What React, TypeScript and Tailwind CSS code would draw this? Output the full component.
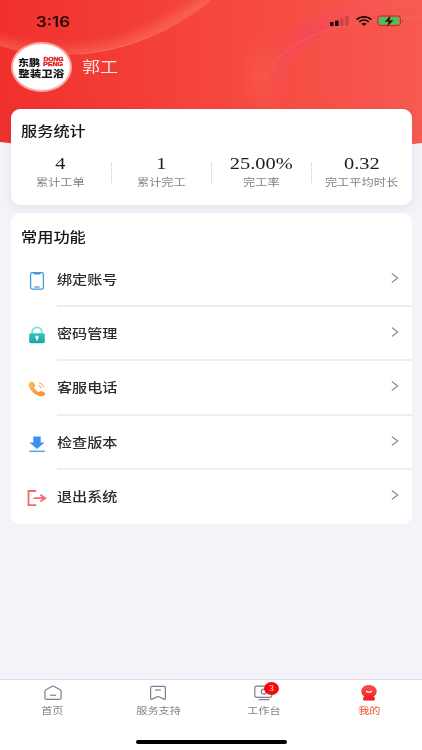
import type { ReactNode } from "react";
import clsx from "clsx";

const stats = [
  { value: "4", label: "累计工单" },
  { value: "1", label: "累计完工" },
  { value: "25.00%", label: "完工率" },
  { value: "0.32", label: "完工平均时长" },
];

const menu = [
  { label: "绑定账号", icon: <PhoneIcon /> },
  { label: "密码管理", icon: <LockIcon /> },
  { label: "客服电话", icon: <CallIcon /> },
  { label: "检查版本", icon: <DownloadIcon /> },
  { label: "退出系统", icon: <ExitIcon /> },
];

const tabs = [
  { label: "首页", icon: <HomeIcon />, active: false },
  { label: "服务支持", icon: <SupportIcon />, active: false },
  { label: "工作台", icon: <DeskIcon />, active: false, badge: 3 },
  { label: "我的", icon: <MineIcon />, active: true },
];

function PhoneIcon() {
  return (
    <svg width="20" height="20" viewBox="0 0 20 20" fill="none">
      <rect x="3.6" y="1.7" width="12.8" height="16.4" rx="1.6" stroke="#3f9bdc" strokeWidth="1.3" />
      <path d="M6 2h8l-.8 1.400H6.800z" fill="#3f9bdc" />
      <path d="M7.500 16h5" stroke="#3f9bdc" strokeWidth="1.300" />
    </svg>
  );
}

function LockIcon() {
  return (
    <svg width="20" height="20" viewBox="0 0 20 20" fill="none">
      <defs>
        <linearGradient id="lock" x1="0" y1="0" x2="0" y2="1">
          <stop stopColor="#35c4bc" />
          <stop offset="1" stopColor="#14aaa6" />
        </linearGradient>
      </defs>
      <path d="M5.200 9V6.800a4.800 4.400 0 0 1 9.600 0V9" stroke="#7ce0d4" strokeWidth="1.800" />
      <rect x="2.200" y="8.200" width="15.600" height="10" rx="1.600" fill="url(#lock)" />
      <circle cx="10" cy="12.200" r="1.600" fill="#fff" />
      <path d="M10 12v3.600" stroke="#fff" strokeWidth="1.500" />
    </svg>
  );
}

function CallIcon() {
  return (
    <svg width="20" height="20" viewBox="0 0 20 20" fill="none">
      <defs>
        <linearGradient id="call" x1="0" y1="0" x2="1" y2="1">
          <stop stopColor="#ffbd5e" />
          <stop offset="1" stopColor="#f68b28" />
        </linearGradient>
      </defs>
      <path
        d="M2.8 3.400C3.900 2.300 5.400 2.300 6.200 3.200l1.700 2.100c.6.9.4 1.700-.5 2.400-.7.6-.5 1.100.1 1.900 1 1.300 2.200 2.300 3.600 3.100.7.4 1.100.3 1.600-.2.7-.7 1.500-.8 2.400-.3l2.200 1.300c1 .7 1.100 1.700.3 2.500-1.500 1.600-3.600 1.700-6 .8C7.100 15.100 3.700 12 2.200 8.200 1.500 6.400 1.600 4.600 2.800 3.400z"
        fill="url(#call)"
      />
      <path d="M11.500 6.600c1.500.3 2.300 1.200 2.600 2.600M12 4c2.600.4 4.300 2 4.700 4.700" stroke="#fbb066" strokeWidth="1.100" />
    </svg>
  );
}

function DownloadIcon() {
  return (
    <svg width="20" height="20" viewBox="0 0 20 20">
      <path d="M6.300 2.400h7.400v6.100H17.600L10 15 2.400 8.500h3.900z" fill="#3f8ff0" />
      <path d="M2.300 16.500h15.500v1.600H2.300z" fill="#5ca5f4" />
    </svg>
  );
}

function ExitIcon() {
  return (
    <svg width="20" height="20" viewBox="0 0 20 20" fill="none" stroke="#f4676c">
      <path d="M9.200 3H1.500v14.200h7.700" strokeWidth="1.800" />
      <path d="M6.500 10.200h11.500M13.400 6.800l4.800 3.400-4.800 3.400" strokeWidth="1.800" />
    </svg>
  );
}

function HomeIcon() {
  return (
    <svg width="20" height="16" viewBox="0 0 20 16" fill="none" stroke="#7b7f8c" strokeWidth="1.200">
      <path d="M1.900 6.200c0-.7.300-1.100 1-1.500L8.800 1.500c.8-.4 1.600-.4 2.400 0l5.900 3.200c.7.400 1 .8 1 1.500v6.600c0 1-.6 1.500-1.600 1.500h-13c-1 0-1.600-.5-1.600-1.500z" />
      <path d="M7 10.200h6" />
    </svg>
  );
}

function SupportIcon() {
  return (
    <svg width="20" height="16" viewBox="0 0 20 16" fill="none" stroke="#7b7f8c" strokeWidth="1.200">
      <path d="M2.600 2.600c0-.8.500-1.300 1.400-1.300h12c.9 0 1.400.5 1.400 1.300v10.800c0 .8-.7 1.100-1.500.7L10.800 11.800a2 2 0 0 0-1.600 0l-5.100 2.300c-.8.400-1.500.1-1.500-.7z" />
      <path d="M7.200 5h5.600" />
    </svg>
  );
}

function DeskIcon() {
  return (
    <svg width="20" height="16" viewBox="0 0 20 16" fill="none" stroke="#7b7f8c" strokeWidth="1.200">
      <rect x=".8" y="1.100" width="17" height="11.200" rx="1.800" />
      <circle cx="9.800" cy="6.600" r="2.500" />
      <path d="M4.600 14.600h10.800" />
    </svg>
  );
}

function MineIcon() {
  return (
    <svg width="20" height="16" viewBox="0 0 20 16">
      <defs>
        <linearGradient id="mine" x1="0" y1="0" x2="0" y2="1">
          <stop stopColor="#fb5450" />
          <stop offset="1" stopColor="#f3161c" />
        </linearGradient>
      </defs>
      <path
        d="M10 0c4.400 0 7.700 2.700 7.700 6.300 0 2.500-1.200 4-3 5 1 .8 1.300 2.200 1.200 3.300-.1.500-.4.800-.9.800H5c-.5 0-.8-.3-.9-.8-.1-1.100.2-2.500 1.200-3.300-1.800-1-3-2.500-3-5C2.300 2.700 5.600 0 10 0z"
        fill="url(#mine)"
      />
      <path d="M7.400 6.200c1.500 1.200 3.700 1.200 5.200 0" stroke="#fff" strokeWidth="1.200" fill="none" strokeLinecap="round" />
    </svg>
  );
}

function HeaderArt() {
  return (
    <svg className="absolute inset-x-0 top-0 -z-10" width="422" height="160" viewBox="0 0 422 160" fill="none">
      <defs>
        <linearGradient id="base" x1="0" y1="0" x2="1" y2="0">
          <stop stopColor="#f0302d" />
          <stop offset=".5" stopColor="#f5463e" />
          <stop offset="1" stopColor="#f75a50" />
        </linearGradient>
        <linearGradient id="ribbon" x1="0" y1="1" x2="1" y2="0">
          <stop stopColor="#f8504c" stopOpacity=".4" />
          <stop offset=".5" stopColor="#f5485a" stopOpacity=".7" />
          <stop offset="1" stopColor="#f7645a" stopOpacity=".2" />
        </linearGradient>
        <radialGradient id="glow">
          <stop stopColor="#ff8068" stopOpacity=".22" />
          <stop offset="1" stopColor="#ff8068" stopOpacity="0" />
        </radialGradient>
        <filter id="soft" x="-20%" y="-50%" width="140%" height="200%">
          <feGaussianBlur stdDeviation="5" />
        </filter>
        <clipPath id="above">
          <path d="M0 0h211Q150 48 84 54 35 58 0 46z" />
        </clipPath>
      </defs>
      <path d="M0 0h422v143Q211 170 0 142z" fill="url(#base)" />
      <g clipPath="url(#above)">
        <path d="M-20 40Q35 58 84 54 150 48 225-12" stroke="#ff8a74" strokeOpacity=".4" strokeWidth="14" filter="url(#soft)" />
      </g>
      <path d="M80 54Q150 48 211 1" stroke="#ff9c88" strokeOpacity=".3" />
      <ellipse cx="262" cy="76" rx="26" ry="40" fill="url(#glow)" />
      <path d="M268 109C266 55 295 15 358 0h64v5C340 14 280 45 278 109z" fill="url(#ribbon)" />
      <path d="M272 66C288 44 325 20 422 17" stroke="#fb7d77" strokeOpacity=".35" />
    </svg>
  );
}

// System fonts here are narrower than the device's, so glyphs are widened
function Wide({ children, className }: { children: ReactNode; className?: string }) {
  return (
    <span className={clsx("inline-block scale-x-120 whitespace-nowrap", className)}>{children}</span>
  );
}

function StatusBar() {
  return (
    <div className="flex h-10 items-center justify-between pt-0.5 pr-[18px] pl-9">
      <Wide className="origin-left font-['Inter'] text-[14px] font-semibold text-[#2a0808]">3:16</Wide>
      <div className="flex items-center gap-[7px]">
        <svg width="19" height="10" viewBox="0 0 19 10" fill="#210808">
          <rect y="6" width="3.600" height="4" rx=".7" />
          <rect x="5" y="4.500" width="3.600" height="5.500" rx=".7" />
          <rect x="10" y="2.300" width="3.600" height="7.700" rx=".7" fillOpacity=".2" />
          <rect x="15.200" width="3.600" height="10" rx=".7" fillOpacity=".2" />
        </svg>
        <svg width="16" height="10" viewBox="0 0 16 10" fill="none" stroke="#210808" strokeWidth="1.700">
          <path d="M.6 3.500C4.800-.1 11.200-.1 15.400 3.500M3.200 5.800c2.800-2.200 6.800-2.200 9.600 0" />
          <path d="M5.400 7.700c1.500-1.200 3.700-1.200 5.200 0L8 10z" fill="#210808" stroke="none" />
        </svg>
        <svg className="-ml-0.5" width="27" height="12" viewBox="0 0 27 12">
          <rect x=".7" y="1" width="22.800" height="9.600" rx="2.600" fill="none" stroke="#9b3a33" />
          <rect x="2.200" y="2.300" width="19.500" height="7" rx="1.400" fill="#35cb59" />
          <path d="M25 4.200c1.200.5 1.200 2.800 0 3.300z" fill="#9b3a33" />
          <path d="M14 0 7.600 6.700h4L9.700 12l6.900-6.700h-4z" fill="#210808" stroke="#e5534a" strokeWidth=".4" />
        </svg>
      </div>
    </div>
  );
}

function Logo() {
  return (
    <div className="flex h-[50px] w-[61px] flex-col items-center justify-center rounded-[50%] border-2 border-[#fba9a5] bg-white font-black text-[#171717]">
      <div className="flex h-[10px] w-[46px] items-center justify-between">
        <Wide className="w-[19px] origin-left text-[9.200px] leading-[10px]">东鹏</Wide>
        <span className="flex w-[21px] flex-col items-center font-['Liberation_Sans'] text-[5px] leading-[4.500px] font-bold text-[#e22a2c]">
          <span className="scale-x-135 [-webkit-text-stroke:0.4px_#e22a2c]">DONG</span>
          <span className="scale-x-140 [-webkit-text-stroke:0.4px_#e22a2c]">PENG</span>
        </span>
      </div>
      <Wide className="mt-px text-[9.600px] leading-[10px]">整装卫浴</Wide>
    </div>
  );
}

export default function App() {
  return (
    <div className="relative isolate flex h-[750px] w-[422px] flex-col overflow-hidden bg-[#f3f4f9] font-['Noto_Sans_CJK_SC',sans-serif]">
      <HeaderArt />
      <StatusBar />

      <header className="flex h-[69px] items-start gap-[10px] pt-0.5 pl-[10.500px]">
        <Logo />
        <Wide className="mt-3 origin-left text-[15px] leading-6 text-[#ffe3df]">郭工</Wide>
      </header>

      <main className="flex grow flex-col gap-2 px-[10.500px]">
        <section className="h-24 rounded-[9px] bg-white pt-[11px] shadow-[0_2px_8px_rgba(60,70,110,0.1)]">
          <h2 className="pl-[10.500px] text-[13.500px] leading-5 font-medium text-[#16181f]">
            <Wide className="origin-left">服务统计</Wide>
          </h2>
          <div className="mt-[13px] grid grid-cols-4">
            {stats.map((s, i) => (
              <div key={s.label} className="relative flex flex-col items-center">
                <Wide className="font-['Liberation_Serif'] text-[17px] leading-[21px] text-[#1c1e24]">{s.value}</Wide>
                <Wide className="text-[10.200px] leading-4 text-[#858585]">{s.label}</Wide>
                {i < 3 && (
                  <i className="absolute top-[10px] -right-px h-5 border-r border-dotted border-[#c6c6c6]" />
                )}
              </div>
            ))}
          </div>
        </section>

        <section className="h-[311px] rounded-[9px] bg-white pt-[11px]">
          <h2 className="pl-[10.500px] text-[13.500px] leading-6 font-medium text-[#16181f]">
            <Wide className="origin-left">常用功能</Wide>
          </h2>
          <ul className="mt-[4.500px]">
            {menu.map((m, i) => (
              <li key={m.label} className="flex h-[54.400px] pl-4">
                <span className="mt-[18px] w-[30px] shrink-0">{m.icon}</span>
                <div
                  className={clsx(
                    "flex grow items-start justify-between pr-[13px]",
                    i < menu.length - 1 && "border-b-2 border-[#eeeeef]",
                  )}
                >
                  <Wide className="mt-4 origin-left text-[12.600px] leading-5 font-medium text-[#2b2b2e]">{m.label}</Wide>
                  <svg className="mt-[19px]" width="8" height="12" viewBox="0 0 8 12" fill="none" stroke="#929292" strokeWidth="1.300">
                    <path d="m.8 1.500 5.800 4.500L.8 10.500" />
                  </svg>
                </div>
              </li>
            ))}
          </ul>
        </section>
      </main>

      <nav className="flex h-[71px] flex-col border-t border-[#dddde0] bg-white">
        <div className="grid grow grid-cols-4 pt-[4.500px]">
          {tabs.map((t) => (
            <div key={t.label} className="relative flex flex-col items-center">
              {t.icon}
              <Wide
                className={clsx(
                  "mt-[1.500px] text-[9.300px] leading-4",
                  t.active ? "text-[#f4511e]" : "text-[#858585]",
                )}
              >
                {t.label}
              </Wide>
              {t.badge && (
                <span className="absolute -top-[2.500px] left-[53px] flex h-[13px] w-[15px] items-center justify-center rounded-[50%] bg-[#f90808] font-['Liberation_Serif'] text-[9px] text-white">
                  {t.badge}
                </span>
              )}
            </div>
          ))}
        </div>
        <div className="mb-[6.500px] h-1 w-[151px] self-center rounded-full bg-black" />
      </nav>
    </div>
  );
}
